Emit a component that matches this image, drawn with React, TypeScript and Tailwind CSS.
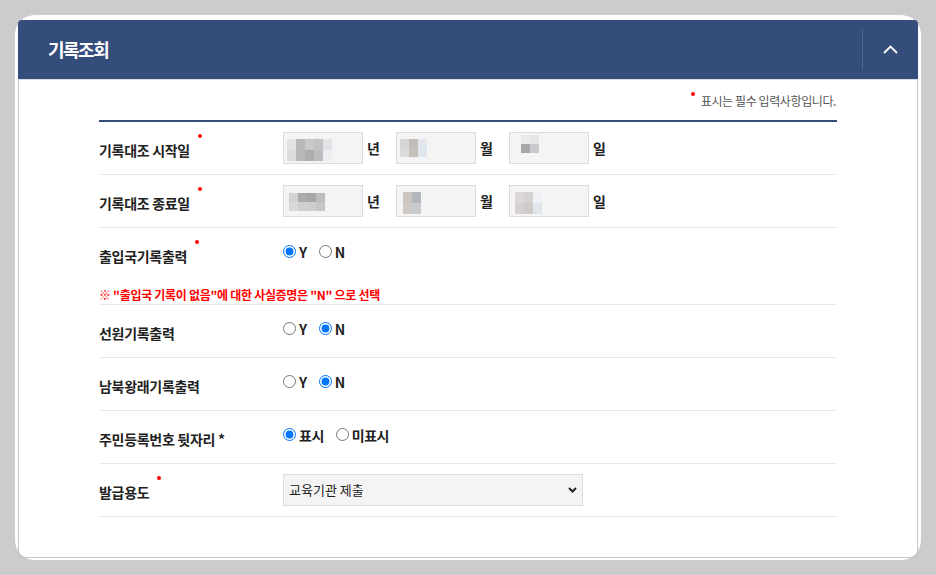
import React from "react";

type Mosaic = { left: number; top: number; w: number; h: number; rows: string[][] };

const startDate: Mosaic[] = [
  { left: 4, top: 7, w: 9, h: 11, rows: [["#e3e3e3", "#b9b9bc", "#c9c9c9", "#c4c2c2", "#e0e3e8"], ["#dcdcdc", "#b8b8ba", "#aeadad", "#bdbdbf", "#eceef1"]] },
  { left: 4, top: 7, w: 9, h: 9, rows: [["#d6d6d6", "#c2bdb8", "#e2e7ee"], ["#dbdbdb", "#c6c0ba", "#dfe5ec"]] },
  { left: 12, top: 3, w: 9, h: 9, rows: [["#ebebec", "#e5e6e8"], ["#a8a6a8", "#c9cacd"]] },
];

const endDate: Mosaic[] = [
  { left: 6, top: 8, w: 9, h: 9, rows: [["#d5d3d2", "#aeabab", "#a9a6a8", "#bdbdbf", "#f3f4f6"], ["#d8d8d8", "#cfcfcf", "#cdcdcd", "#c6c6c8", "#f3f4f6"]] },
  { left: 7, top: 7, w: 9, h: 11, rows: [["#ccc6c0", "#b3b6ba"], ["#cfcac6", "#c8cacd"]] },
  { left: 6, top: 7, w: 9, h: 11, rows: [["#ddd8d8", "#d4d2d2", "#eff1f4"], ["#d6d0d0", "#cfcbcb", "#e1e6ee"]] },
];

function RedDot({ className = "" }: { className?: string }) {
  return <span className={`inline-block w-[4px] h-[4px] rounded-full bg-[#ff0000] relative ${className}`} />;
}

function Label({ text, required }: { text: string; required?: boolean }) {
  return (
    <div className="w-[184px] shrink-0 flex items-center mt-[4px]">
      <span className="text-[14px] font-bold text-[#222] tracking-[-0.3px] leading-[20px]">{text}</span>
      {required && <RedDot className="ml-[8px] -top-[14px]" />}
    </div>
  );
}

function MaskedInput({ m }: { m: Mosaic }) {
  return (
    <div className="w-[80px] h-[32px] bg-[#f4f4f4] border border-[#dcdcdc]">
      <div style={{ marginLeft: m.left - 1, marginTop: m.top - 1 }}>
        {m.rows.map((row, i) => (
          <div key={i} className="flex">
            {row.map((c, j) => (
              <div key={j} style={{ width: m.w, height: m.h, backgroundColor: c }} />
            ))}
          </div>
        ))}
      </div>
    </div>
  );
}

function DateFields({ cells }: { cells: Mosaic[] }) {
  const units = ["년", "월", "일"];
  return (
    <div className="flex items-center">
      {cells.map((m, i) => (
        <div key={i} className="flex items-center">
          <MaskedInput m={m} />
          <span className="w-[33px] pl-[4px] text-[14px] font-bold text-[#222]">{units[i]}</span>
        </div>
      ))}
    </div>
  );
}

function Radios({ name, options, checked }: { name: string; options: string[]; checked: number }) {
  return (
    <div className="flex items-center -mt-[5px]">
      {options.map((o, i) => (
        <label key={o} className="flex items-center mr-[12px]">
          <input type="radio" name={name} defaultChecked={i === checked} className="w-[13px] h-[13px] m-0" />
          <span className="ml-[3px] text-[14px] font-bold text-[#222] tracking-[-0.5px] leading-[20px]">{o}</span>
        </label>
      ))}
    </div>
  );
}

function Row({ children }: { children: React.ReactNode }) {
  return <div className="h-[53px] flex items-center border-b border-[#e8e8e8]">{children}</div>;
}

export default function App() {
  return (
    <div className="min-h-[575px] bg-[#cccccc] p-[15px] font-['Noto_Sans_CJK_KR','Noto_Sans',sans-serif]">
      <div className="rounded-[20px] bg-white pl-[3px] pr-[3px] pt-[5px] pb-[2px]">
        <div className="h-[59px] bg-[#344d7a] rounded-t-[4px] flex items-center justify-between">
          <h2 className="pl-[30px] text-[18px] font-bold text-white tracking-[-1.5px]">기록조회</h2>
          <div className="w-[56px] h-[40px] border-l border-[#4d6491] flex items-center justify-center">
            <svg width="15" height="9" viewBox="0 0 15 9" fill="none">
              <path d="M1 8 L7.5 1.5 L14 8" stroke="white" strokeWidth="1.8" />
            </svg>
          </div>
        </div>

        <div className="border-x border-b border-t border-[#c8c8c8] border-t-[#d9dee6] px-[80px] pt-[12px] pb-[40px]">
          <div className="flex justify-end items-center h-[18px] pr-[1px]">
            <RedDot className="mr-[6px] -top-[7px]" />
            <span className="text-[12px] text-[#555] tracking-[-0.4px]">표시는 필수 입력사항입니다.</span>
          </div>
          <div className="mt-[10px] h-[2px] bg-[#344d7a]" />

          <Row>
            <Label text="기록대조 시작일" required />
            <DateFields cells={startDate} />
          </Row>
          <Row>
            <Label text="기록대조 종료일" required />
            <DateFields cells={endDate} />
          </Row>

          <div className="border-b border-[#e8e8e8]">
            <div className="h-[52px] flex items-center">
              <Label text="출입국기록출력" required />
              <Radios name="immig" options={["Y", "N"]} checked={0} />
            </div>
            <p className="h-[24px] pt-[6px] leading-[18px] text-[12px] font-bold text-[#ff0000] tracking-[-0.3px]">
              ※ "출입국 기록이 없음"에 대한 사실증명은 "N" 으로 선택
            </p>
          </div>

          <Row>
            <Label text="선원기록출력" />
            <Radios name="seaman" options={["Y", "N"]} checked={1} />
          </Row>
          <Row>
            <Label text="남북왕래기록출력" />
            <Radios name="nk" options={["Y", "N"]} checked={1} />
          </Row>
          <Row>
            <Label text="주민등록번호 뒷자리 *" />
            <Radios name="rrn" options={["표시", "미표시"]} checked={0} />
          </Row>
          <Row>
            <Label text="발급용도" required />
            <div className="relative w-[300px] h-[32px]">
              <select
                defaultValue="edu"
                className="appearance-none w-full h-full bg-[#f4f4f4] border border-[#dcdcdc] pl-[5px] text-[13px] text-[#222]"
              >
                <option value="edu">교육기관 제출</option>
              </select>
              <svg className="absolute right-[6px] top-[13px] pointer-events-none" width="9" height="6" viewBox="0 0 9 6" fill="none">
                <path d="M1 1 L4.5 4.5 L8 1" stroke="#222" strokeWidth="2" />
              </svg>
            </div>
          </Row>
        </div>
      </div>
    </div>
  );
}
